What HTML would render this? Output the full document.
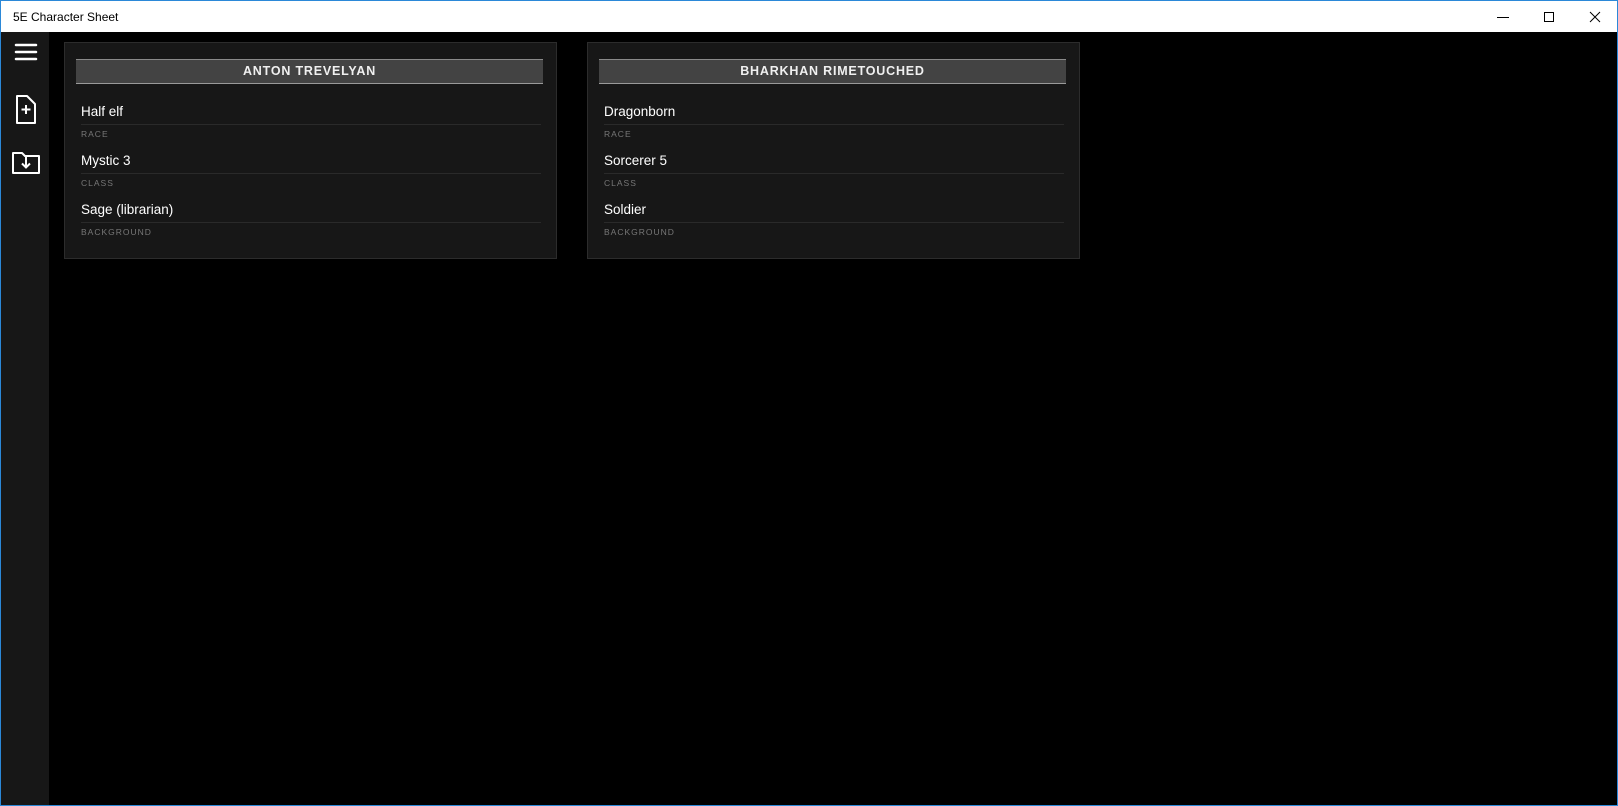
<!DOCTYPE html><html><head><style>
body{margin:0;width:1618px;height:806px;background:#000;font-family:"Liberation Sans",sans-serif;position:relative;overflow:hidden}
.win{position:absolute;left:0;top:0;width:1616px;height:804px;border:1px solid #2b88d8}
.title{position:absolute;left:0;top:0;width:1616px;height:31px;background:#fff;font-size:12px;color:#000}
.title span{position:absolute;left:12px;top:9px}
.side{position:absolute;left:0;top:31px;width:48px;height:773px;background:#171717}
.card{position:absolute;top:41px;width:491px;height:215px;background:#171717;border:1px solid #2c2c2c}
.hd{position:absolute;left:11px;top:16px;width:467px;height:23px;background:#434343;border-top:1px solid #8a8a8a;border-bottom:1px solid #9a9a9a;color:#f0f0f0;font-weight:bold;font-size:12.5px;letter-spacing:.8px;text-align:center;line-height:23px}
.row{position:absolute;left:16px;width:460px}
.v{color:#fff;font-size:13.5px;height:22px;border-bottom:1px solid #2a2a2a;line-height:20px}
.l{color:#777;font-size:8.5px;letter-spacing:1px;margin-top:4px}
</style></head><body><div class="win">
<div class="title"><span>5E Character Sheet</span>
<svg style="position:absolute;left:1490px;top:8px" width="120" height="16"><line x1="6" y1="8.5" x2="18" y2="8.5" stroke="#000"/><rect x="53.5" y="3.5" width="9" height="9" fill="none" stroke="#000"/><path d="M99 3L109 13M109 3L99 13" stroke="#000"/></svg></div>
<div class="side"><svg width="48" height="160">
<path d="M15 13h20M15 20h20M15 27h20" stroke="#fff" stroke-width="2.5" stroke-linecap="round"/>
<path d="M16 64h10l8 8v19h-18z" fill="none" stroke="#fff" stroke-width="2" stroke-linejoin="round"/><path d="M25 73v9M20.5 77.5h9" stroke="#fff" stroke-width="2"/>
<path d="M12 121h9l3 3h14v17h-26z" fill="none" stroke="#fff" stroke-width="2" stroke-linejoin="round"/><path d="M25 125v10M21 131.5l4 4 4-4" fill="none" stroke="#fff" stroke-width="2"/>
</svg></div>
<div class="card" style="left:63px"><div class="hd">ANTON TREVELYAN</div>
<div class="row" style="top:59px"><div class="v">Half elf</div><div class="l">RACE</div></div>
<div class="row" style="top:108px"><div class="v">Mystic 3</div><div class="l">CLASS</div></div>
<div class="row" style="top:157px"><div class="v">Sage (librarian)</div><div class="l">BACKGROUND</div></div></div>
<div class="card" style="left:586px"><div class="hd">BHARKHAN RIMETOUCHED</div>
<div class="row" style="top:59px"><div class="v">Dragonborn</div><div class="l">RACE</div></div>
<div class="row" style="top:108px"><div class="v">Sorcerer 5</div><div class="l">CLASS</div></div>
<div class="row" style="top:157px"><div class="v">Soldier</div><div class="l">BACKGROUND</div></div></div>
</div></body></html>
